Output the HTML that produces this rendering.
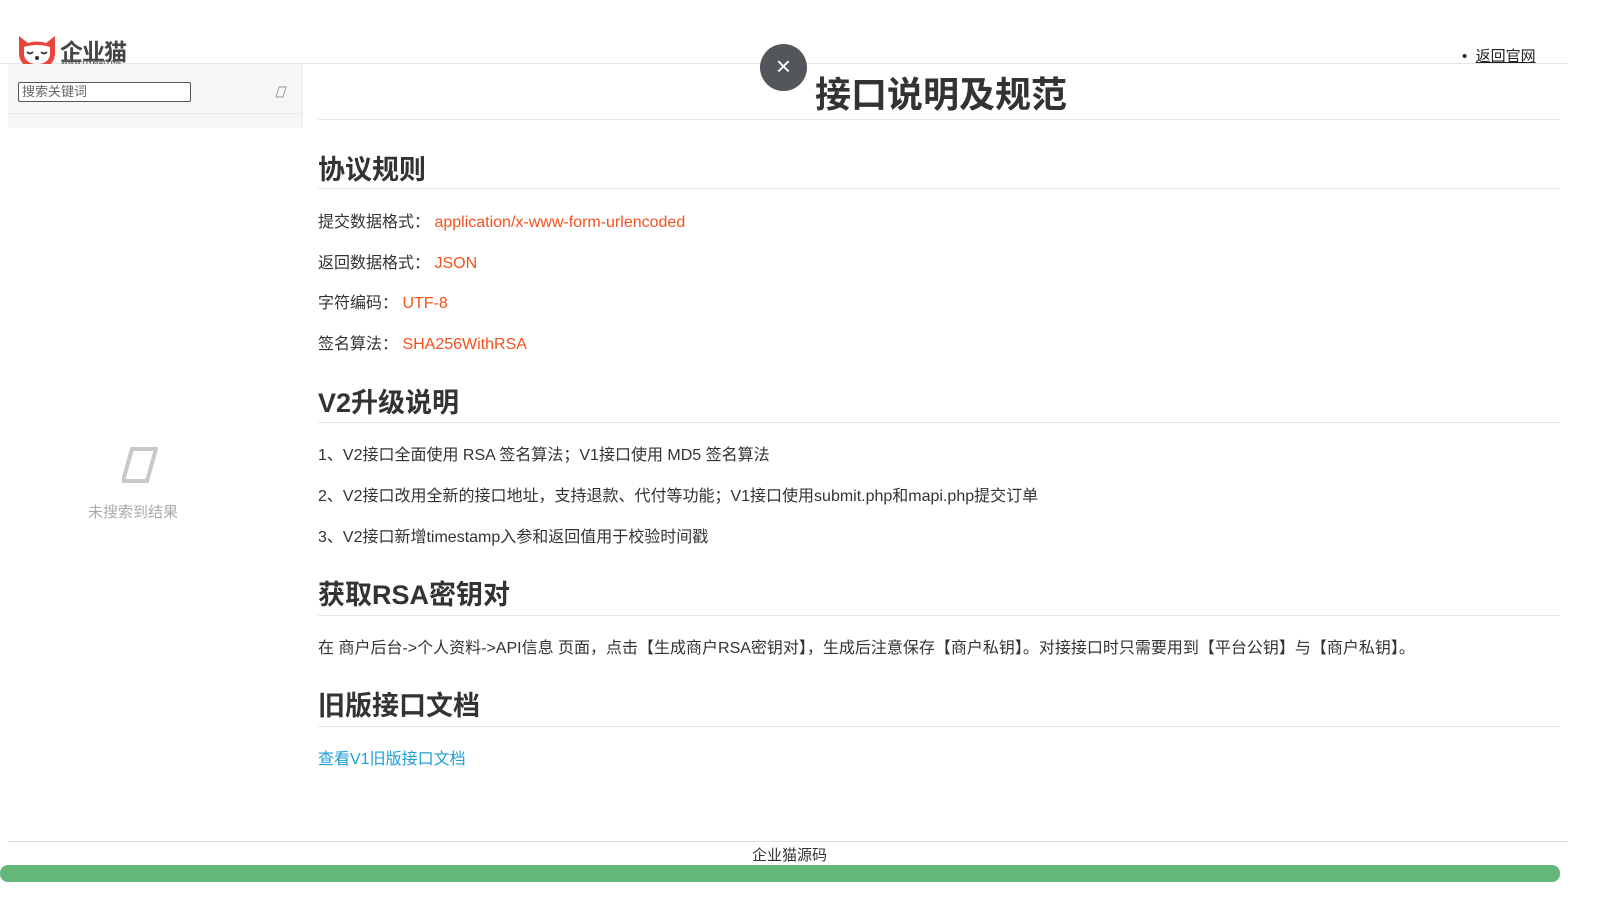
<!DOCTYPE html>
<html><head><meta charset="utf-8"><style>
*{margin:0;padding:0;box-sizing:border-box}
body{width:1600px;height:900px;background:#fff;font-family:"Liberation Sans","Noto Sans CJK SC",sans-serif;color:#333;position:relative;overflow:hidden}
.abs{position:absolute}
.topline{left:0;top:63px;width:1568px;height:1px;background:#e6e6e6}
.side{left:8px;top:64px;width:295px;height:64px;background:#f6f6f6;border-right:1px solid #eee}
.h{left:318px;font-size:27px;font-weight:bold;color:#333;white-space:nowrap}
.hl{left:318px;width:1242px;height:1px;background:#e8e8e8}
.p{left:318px;font-size:16px;color:#333;white-space:nowrap}
.o{color:#f4511e}
</style></head><body>
<div class="topline abs"></div>
<svg class="abs" style="left:16px;top:34px" width="42" height="36" viewBox="0 0 42 36"><path d="M3 2 L12 9 Q21 6 30 9 L39 2 L39 20 Q38 34 21 35 Q4 34 3 20 Z" fill="#e8453c"/><path d="M8 13 Q21 9 34 13 L34 21 Q32 30 21 30 Q10 30 8 21Z" fill="#fff"/><path d="M11 18 q3 3 6 0 M25 18 q3 3 6 0" stroke="#333" stroke-width="1.6" fill="none"/><circle cx="21" cy="24" r="2" fill="#333"/></svg>
<div class="abs" style="left:60px;top:33px;font-size:23px;font-weight:bold;color:#444;letter-spacing:-1px">企业猫</div>
<div class="abs" style="left:61px;top:60px;font-size:7px;color:#666;font-weight:bold">WWW.QYMAO.CN</div>
<div class="side abs"></div>
<div class="abs" style="left:8px;top:113px;width:295px;height:1px;background:#eaeaea"></div>
<div class="abs" style="left:18px;top:82px;width:173px;height:20px;border:1px solid #555;border-radius:2px;background:#fff;font-size:13px;color:#666;padding:0 3px;line-height:18px">搜索关键词</div>
<svg class="abs" style="left:275px;top:86px" width="12" height="12"><path d="M4 1h7l-3 10h-7z" fill="none" stroke="#aaa" stroke-width="1.2"/></svg>
<svg class="abs" style="left:122px;top:447px" width="36" height="36"><path d="M10 2h24l-9 32h-24z" fill="none" stroke="#c8c8c8" stroke-width="4"/></svg>
<div class="abs" style="left:88px;top:501px;font-size:15px;color:#aaa">未搜索到结果</div>
<div class="abs" style="left:760px;top:44px;width:47px;height:47px;border-radius:50%;background:#53565b;color:#fff;font-size:26px;text-align:center;line-height:45px">×</div>
<div class="abs" style="left:1462px;top:45px;font-size:15px;color:#222">•&nbsp;&nbsp;<span style="text-decoration:underline">返回官网</span></div>
<div class="abs" style="left:815px;top:66px;font-size:36px;font-weight:bold;color:#333">接口说明及规范</div>
<div class="hl abs" style="top:119px"></div>
<div class="h abs" style="top:148px">协议规则</div>
<div class="hl abs" style="top:188px"></div>
<div class="p abs" style="top:208px">提交数据格式：&nbsp;<span class="o">application/x-www-form-urlencoded</span></div>
<div class="p abs" style="top:249px">返回数据格式：&nbsp;<span class="o">JSON</span></div>
<div class="p abs" style="top:289px">字符编码：&nbsp;<span class="o">UTF-8</span></div>
<div class="p abs" style="top:330px">签名算法：&nbsp;<span class="o">SHA256WithRSA</span></div>
<div class="h abs" style="top:381px">V2升级说明</div>
<div class="hl abs" style="top:422px"></div>
<div class="p abs" style="top:441px">1、V2接口全面使用 RSA 签名算法；V1接口使用 MD5 签名算法</div>
<div class="p abs" style="top:482px">2、V2接口改用全新的接口地址，支持退款、代付等功能；V1接口使用submit.php和mapi.php提交订单</div>
<div class="p abs" style="top:523px">3、V2接口新增timestamp入参和返回值用于校验时间戳</div>
<div class="h abs" style="top:573px">获取RSA密钥对</div>
<div class="hl abs" style="top:615px"></div>
<div class="p abs" style="top:634px">在 商户后台-&gt;个人资料-&gt;API信息 页面，点击【生成商户RSA密钥对】，生成后注意保存【商户私钥】。对接接口时只需要用到【平台公钥】与【商户私钥】。</div>
<div class="h abs" style="top:684px">旧版接口文档</div>
<div class="hl abs" style="top:726px"></div>
<div class="p abs" style="top:745px;color:#1e9fd8">查看V1旧版接口文档</div>
<div class="abs" style="left:8px;top:841px;width:1560px;height:1px;background:#ddd"></div>
<div class="abs" style="left:752px;top:844px;font-size:15px;color:#333">企业猫源码</div>
<div class="abs" style="left:0;top:865px;width:1560px;height:17px;background:#62b878;border-radius:8px"></div>
</body></html>
